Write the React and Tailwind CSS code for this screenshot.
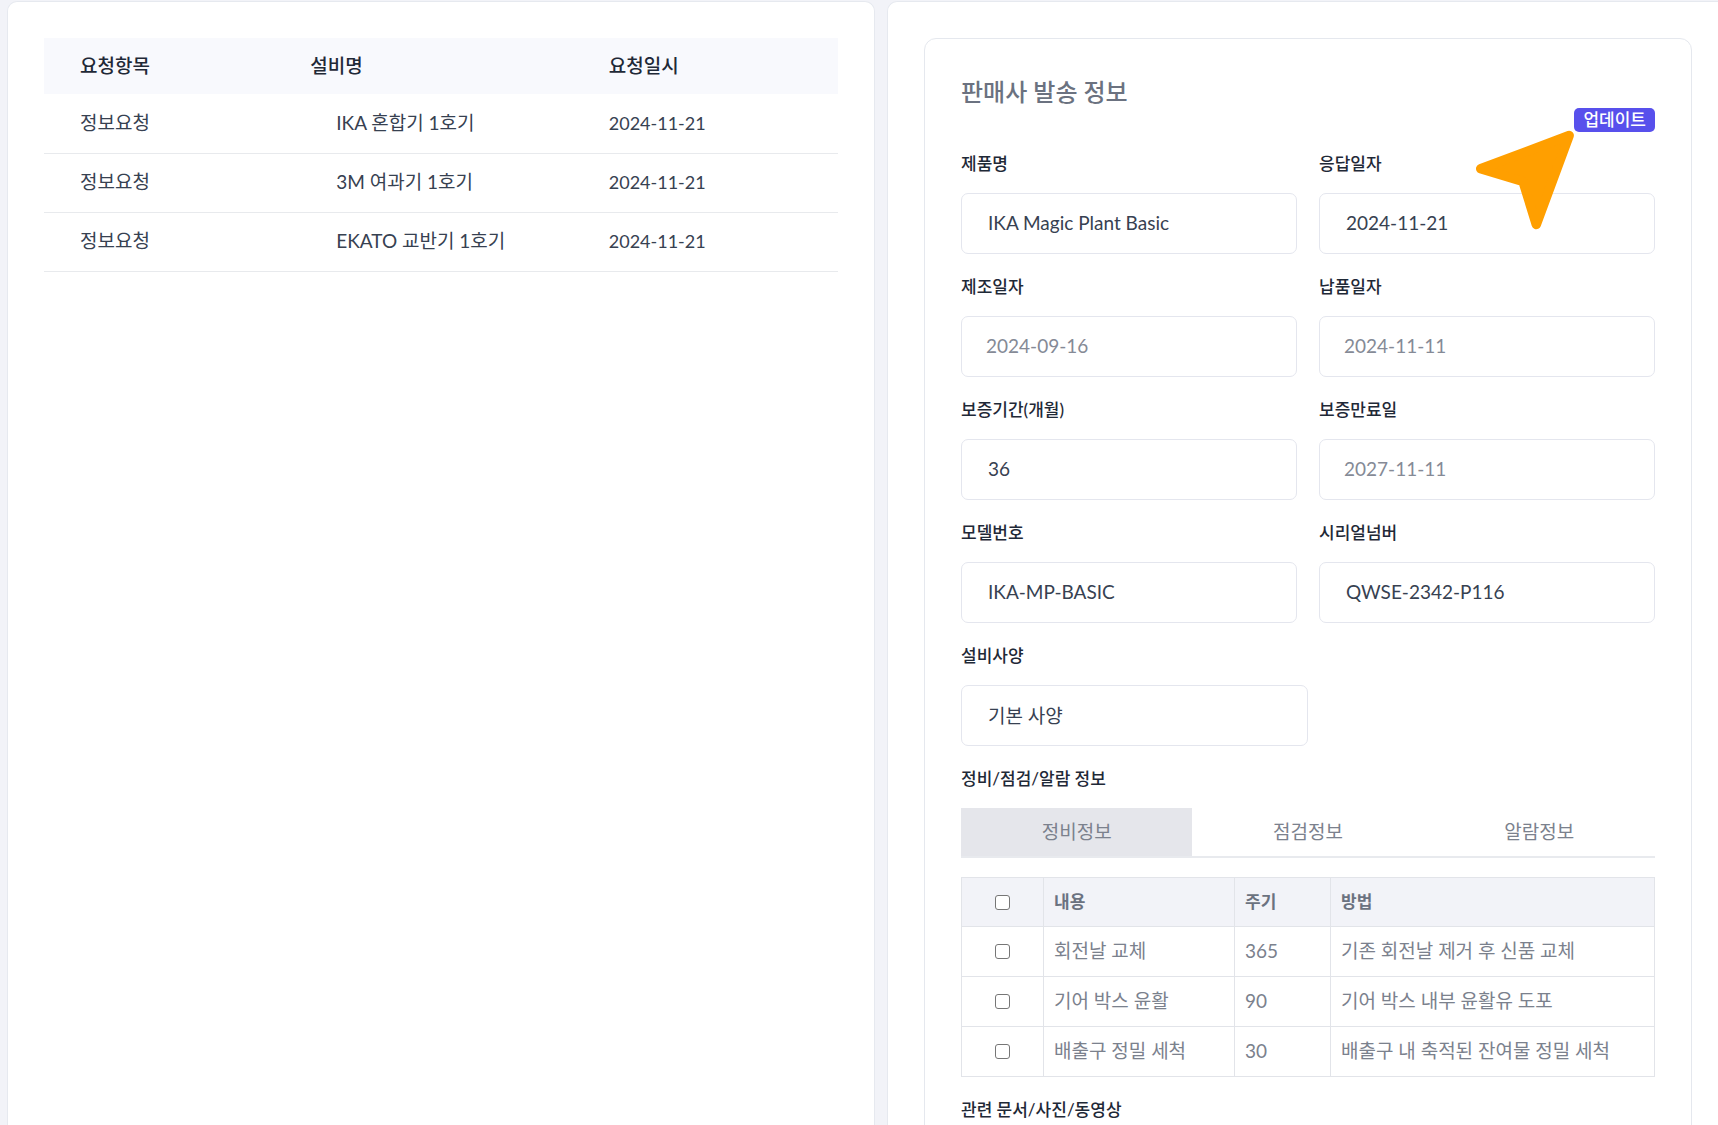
import React, { useState } from "react";

const requests = [
  { id: 1, type: "정보요청", name: "IKA 혼합기 1호기", date: "2024-11-21" },
  { id: 2, type: "정보요청", name: "3M 여과기 1호기", date: "2024-11-21" },
  { id: 3, type: "정보요청", name: "EKATO 교반기 1호기", date: "2024-11-21" },
];

const fields = [
  { id: "product", label: "제품명", value: "IKA Magic Plant Basic" },
  { id: "responseDate", label: "응답일자", value: "2024-11-21" },
  { id: "madeDate", label: "제조일자", value: "2024-09-16", muted: true },
  { id: "deliveryDate", label: "납품일자", value: "2024-11-11", muted: true },
  { id: "warranty", label: "보증기간(개월)", value: "36" },
  { id: "warrantyEnd", label: "보증만료일", value: "2027-11-11", muted: true },
  { id: "model", label: "모델번호", value: "IKA-MP-BASIC" },
  { id: "serial", label: "시리얼넘버", value: "QWSE-2342-P116" },
];

const tabs = ["정비정보", "점검정보", "알람정보"];

const tasks = [
  { id: 1, content: "회전날 교체", cycle: "365", method: "기존 회전날 제거 후 신품 교체" },
  { id: 2, content: "기어 박스 윤활", cycle: "90", method: "기어 박스 내부 윤활유 도포" },
  { id: 3, content: "배출구 정밀 세척", cycle: "30", method: "배출구 내 축적된 잔여물 정밀 세척" },
];

const Field = ({ id, label, value, muted }) => (
  <div>
    <label
      htmlFor={id}
      className="block text-[17px] leading-6 font-medium text-[#1f2937]"
    >
      {label}
    </label>
    <input
      id={id}
      type="text"
      defaultValue={value}
      className={`mt-[17px] block h-[61px] w-full rounded-[7px] border border-[#e4e6ee] bg-white pr-4 pb-[3px] text-[19px] outline-none ${
        muted ? "pl-6 text-[#858a96]" : "pl-[26px] text-[#374151]"
      }`}
    />
  </div>
);

const Checkbox = ({ label, checked, onChange }) => (
  <input
    type="checkbox"
    aria-label={label}
    checked={checked}
    onChange={onChange}
    className="mx-auto block size-[15px] appearance-none rounded-[3px] border border-[#767676] bg-white checked:bg-[#5850ec]"
  />
);

const PointerArrow = () => (
  <svg
    className="pointer-events-none absolute top-[22px] right-full"
    width="98"
    height="100"
    viewBox="0 0 98 100"
    aria-hidden="true"
  >
    <path
      d="M4.7 38.7 93.2 5.5 60.3 94.5 47 51.5Z"
      fill="#ff9f00"
      stroke="#ff9f00"
      strokeWidth="9.4"
      strokeLinejoin="round"
    />
  </svg>
);

const RequestList = () => (
  <section className="rounded-t-[10px] border border-b-0 border-[#e6e9ef] bg-white px-9 pt-9">
    <table className="w-full table-fixed text-left text-[19px] text-[#374151]">
      <colgroup>
        <col className="w-[29%]" />
        <col className="w-[37.6%]" />
        <col />
      </colgroup>
      <thead>
        <tr className="h-14 bg-[#f8f9fd] text-[#1f2937]">
          <th className="pl-9 font-medium">요청항목</th>
          <th className="pl-9 font-medium">설비명</th>
          <th className="pl-9 font-medium">요청일시</th>
        </tr>
      </thead>
      <tbody>
        {requests.map((item) => (
          <tr key={item.id} className="h-[59px] border-b border-[#e8eaed]">
            <td className="pl-9">{item.type}</td>
            <td className="pl-[62px]">{item.name}</td>
            <td className="pl-9 text-[18px]">{item.date}</td>
          </tr>
        ))}
      </tbody>
    </table>
  </section>
);

const MaintenanceTable = () => {
  const [selected, setSelected] = useState([]);
  const allSelected = selected.length === tasks.length;

  const toggle = (id) =>
    setSelected((prev) =>
      prev.includes(id) ? prev.filter((x) => x !== id) : [...prev, id]
    );

  return (
    <table className="mt-[19px] w-full table-fixed border-collapse text-left text-[19px] text-[#7b818d]">
      <colgroup>
        <col className="w-[82px]" />
        <col className="w-[191px]" />
        <col className="w-[96px]" />
        <col />
      </colgroup>
      <thead>
        <tr className="h-[49px] bg-[#f2f3f8] text-[17px] text-[#6b7280]">
          <th className="border border-[#e2e4e9]">
            <Checkbox
              label="전체 선택"
              checked={allSelected}
              onChange={() =>
                setSelected(allSelected ? [] : tasks.map((t) => t.id))
              }
            />
          </th>
          <th className="border border-[#e2e4e9] px-[10px] font-bold">내용</th>
          <th className="border border-[#e2e4e9] px-[10px] font-bold">주기</th>
          <th className="border border-[#e2e4e9] px-[10px] font-bold">방법</th>
        </tr>
      </thead>
      <tbody>
        {tasks.map((task) => (
          <tr key={task.id} className="h-[50px]">
            <td className="border border-[#e2e4e9]">
              <Checkbox
                label={task.content}
                checked={selected.includes(task.id)}
                onChange={() => toggle(task.id)}
              />
            </td>
            <td className="border border-[#e2e4e9] px-[10px]">{task.content}</td>
            <td className="border border-[#e2e4e9] px-[10px]">{task.cycle}</td>
            <td className="border border-[#e2e4e9] px-[10px]">{task.method}</td>
          </tr>
        ))}
      </tbody>
    </table>
  );
};

const SellerInfo = () => {
  const [activeTab, setActiveTab] = useState(tabs[0]);

  return (
    <section className="rounded-tl-[10px] border border-r-0 border-b-0 border-[#e6e9ef] bg-white pt-9 pr-[26px] pl-9">
      <div className="rounded-xl border border-[#e5e8ee] p-9">
        <h2 className="text-[24px] leading-[33px] font-medium text-[#6b7280]">
          판매사 발송 정보
        </h2>
        <div className="flex justify-end">
          <div className="relative">
            <button
              type="button"
              className="block h-6 rounded-[5px] bg-[#5850ec] px-[9px] text-[17px] leading-6 font-medium text-white"
            >
              업데이트
            </button>
            <PointerArrow />
          </div>
        </div>

        {/* 제품 정보 */}
        <div className="mt-5 grid grid-cols-2 gap-x-[22px] gap-y-[21px]">
          {fields.map((field) => (
            <Field key={field.id} {...field} />
          ))}
        </div>
        <div className="mt-[21px] w-1/2">
          <Field id="spec" label="설비사양" value="기본 사양" />
        </div>

        {/* 정비/점검/알람 */}
        <h3 className="mt-[21px] text-[17px] leading-6 font-medium text-[#1f2937]">
          정비/점검/알람 정보
        </h3>
        <div
          role="tablist"
          className="mt-[17px] grid grid-cols-3 border-b-2 border-[#e8eaee]"
        >
          {tabs.map((tab) => (
            <button
              key={tab}
              type="button"
              role="tab"
              aria-selected={activeTab === tab}
              onClick={() => setActiveTab(tab)}
              className={`h-12 text-[19px] text-[#7b818d] ${
                activeTab === tab ? "bg-[#e5e6eb]" : ""
              }`}
            >
              {tab}
            </button>
          ))}
        </div>
        <MaintenanceTable />

        <h3 className="mt-[21px] text-[17px] leading-6 font-medium text-[#1f2937]">
          관련 문서/사진/동영상
        </h3>
      </div>
    </section>
  );
};

const App = () => {
  return (
    <div className="grid h-screen grid-cols-[868fr_831fr] gap-3 overflow-hidden bg-[#f2f3f8] pt-px pl-[7px] font-['Lato','Noto_Sans_CJK_KR',sans-serif]">
      <RequestList />
      <SellerInfo />
    </div>
  );
};

export default App;
